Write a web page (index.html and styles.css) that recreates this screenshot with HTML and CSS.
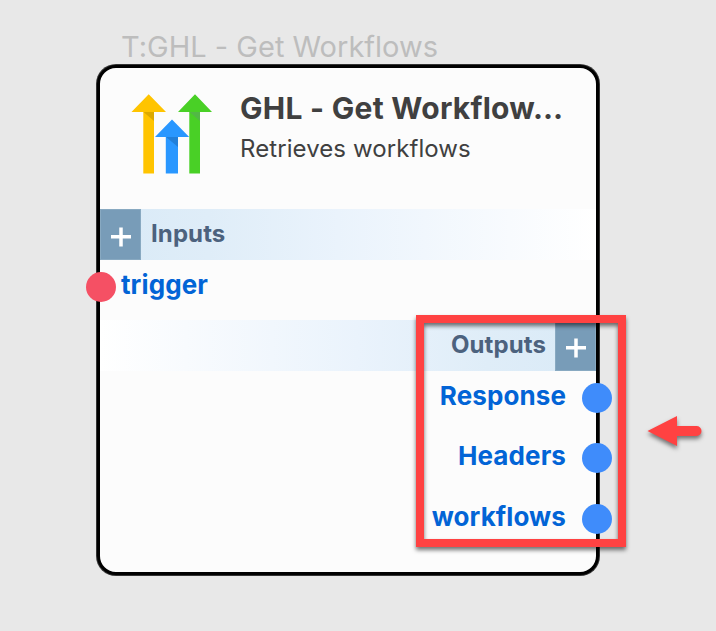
FILE: index.html
```html
<!DOCTYPE html>
<html lang="en">
<head>
<meta charset="utf-8">
<title>GHL - Get Workflows</title>
<link rel="stylesheet" href="styles.css">
</head>
<body>
<main class="canvas">
  <div class="caption"><span>T:GHL - Get Workflows</span></div>
  <section class="node">
    <header class="head">
      <svg class="logo" width="82" height="82" viewBox="131 93 82 82">
        <path fill="#ffc400" d="M148.700 94.300L166 112H154V173.500H143.300V112H131.500Z"/>
        <path fill="#49d026" d="M195 94.300L212 112H200V173.500H189.300V112H178Z"/>
        <path fill="#2997ff" d="M172 119.500L189.200 137H178V173.500H165.800V137H155Z"/>
        <path fill="#dca900" d="M143.500 112H154V121Z"/>
        <path fill="#52b846" d="M189.500 112H200V121Z"/>
        <path fill="#217fd9" d="M166 137H178V147Z"/>
      </svg>
      <div class="titles">
        <h1><span>GHL - Get Workflow…</span></h1>
        <p><span>Retrieves workflows</span></p>
      </div>
    </header>
    <div class="band band-in">
      <button class="add" aria-label="Add input"><svg width="20" height="20"><path d="M10 0.500V19.500M0 9.700H20"/></svg></button>
      <span class="band-label">Inputs</span>
    </div>
    <div class="port port-in"><i class="dot"></i><span>trigger</span></div>
    <div class="band band-out">
      <span class="band-label">Outputs</span>
      <button class="add" aria-label="Add output"><svg width="20" height="20"><path d="M10 0.500V19.500M0 9.700H20"/></svg></button>
    </div>
    <div class="port port-out"><span>Response</span><i class="dot"></i></div>
    <div class="port port-out"><span>Headers</span><i class="dot"></i></div>
    <div class="port port-out"><span>workflows</span><i class="dot"></i></div>
  </section>
  <div class="highlight"></div>
  <svg class="arrow" width="70" height="50" viewBox="640 408 70 50">
    <path d="M647.500 431L677 416V426H696.500A5 5 0 0 1 696.500 436H677V446Z"/>
  </svg>
</main>
</body>
</html>
```
FILE: styles.css
```css
* { box-sizing: border-box; }
body { margin: 0; background: #e8e8e8; font-family: Inter, sans-serif; font-feature-settings: "calt" 0; }
.canvas { position: relative; width: 716px; height: 631px; padding: 28px 0 0 97px; overflow: hidden; }
.caption { height: 37px; padding-left: 24px; font-size: 29px; line-height: 37px; color: #bdbdbd; white-space: nowrap; }
.node {
  width: 502px; height: 510px;
  border: 3px solid #000; border-radius: 19px;
  background: #fcfcfc;
  box-shadow: 0 0 0 1px #333;
}
.head { display: flex; height: 141px; padding: 25px 0 0 31px; }
.logo { flex: none; }
.titles { padding: 0 0 0 27px; color: #404040; white-space: nowrap; }
h1 { margin: -1px 0 0; font-size: 30px; line-height: 32px; font-weight: 700; letter-spacing: 0.270px; }
p { margin: 9px 0 0; font-size: 24px; line-height: 32px; letter-spacing: 0.080px; }
.band { display: flex; height: 51px; }
.band-in { background: linear-gradient(90deg, #d9eaf7, #dfedf8 22%, #eaf3fc 48%, #fff); }
.band-out { justify-content: flex-end; background: linear-gradient(270deg, #d9eaf7, #dfedf8 22%, #eaf3fc 48%, #fff); }
.add { display: flex; width: 41px; height: 51px; padding: 4px 0 0; border: 1px solid #88a9c1; background: #789cb8; align-items: center; justify-content: center; }
.add path { stroke: #fff; stroke-width: 3.500; fill: none; }
.band-label { padding: 0 9px 0 10px; font-size: 24px; line-height: 49px; font-weight: 700; letter-spacing: 0.100px; color: #4c627e; }
.port { display: flex; height: 60.500px; align-items: center; font-size: 26px; line-height: 32px; font-weight: 700; letter-spacing: 0.100px; color: #0264d6; }
.port-in { height: 60px; padding-bottom: 7px; margin-left: -14px; }
.port-in span { margin-left: 5px; margin-top: -4px; }
.port-out { justify-content: flex-end; padding-bottom: 7px; margin-right: -16px; }
.port-out span { margin-right: 16px; margin-top: -4px; }
.dot { width: 30px; height: 30px; border-radius: 50%; background: #3f8cfb; }
.port-in .dot { background: #f55064; }
.highlight {
  position: absolute; left: 416px; top: 315px; width: 210px; height: 232px;
  border: 8px solid #ff4242;
  filter: drop-shadow(0 3px 2px rgba(0,0,0,.55));
}
.arrow { position: absolute; left: 640px; top: 408px; fill: #ff4242; filter: drop-shadow(0 3px 2px rgba(0,0,0,.5)); }
```
